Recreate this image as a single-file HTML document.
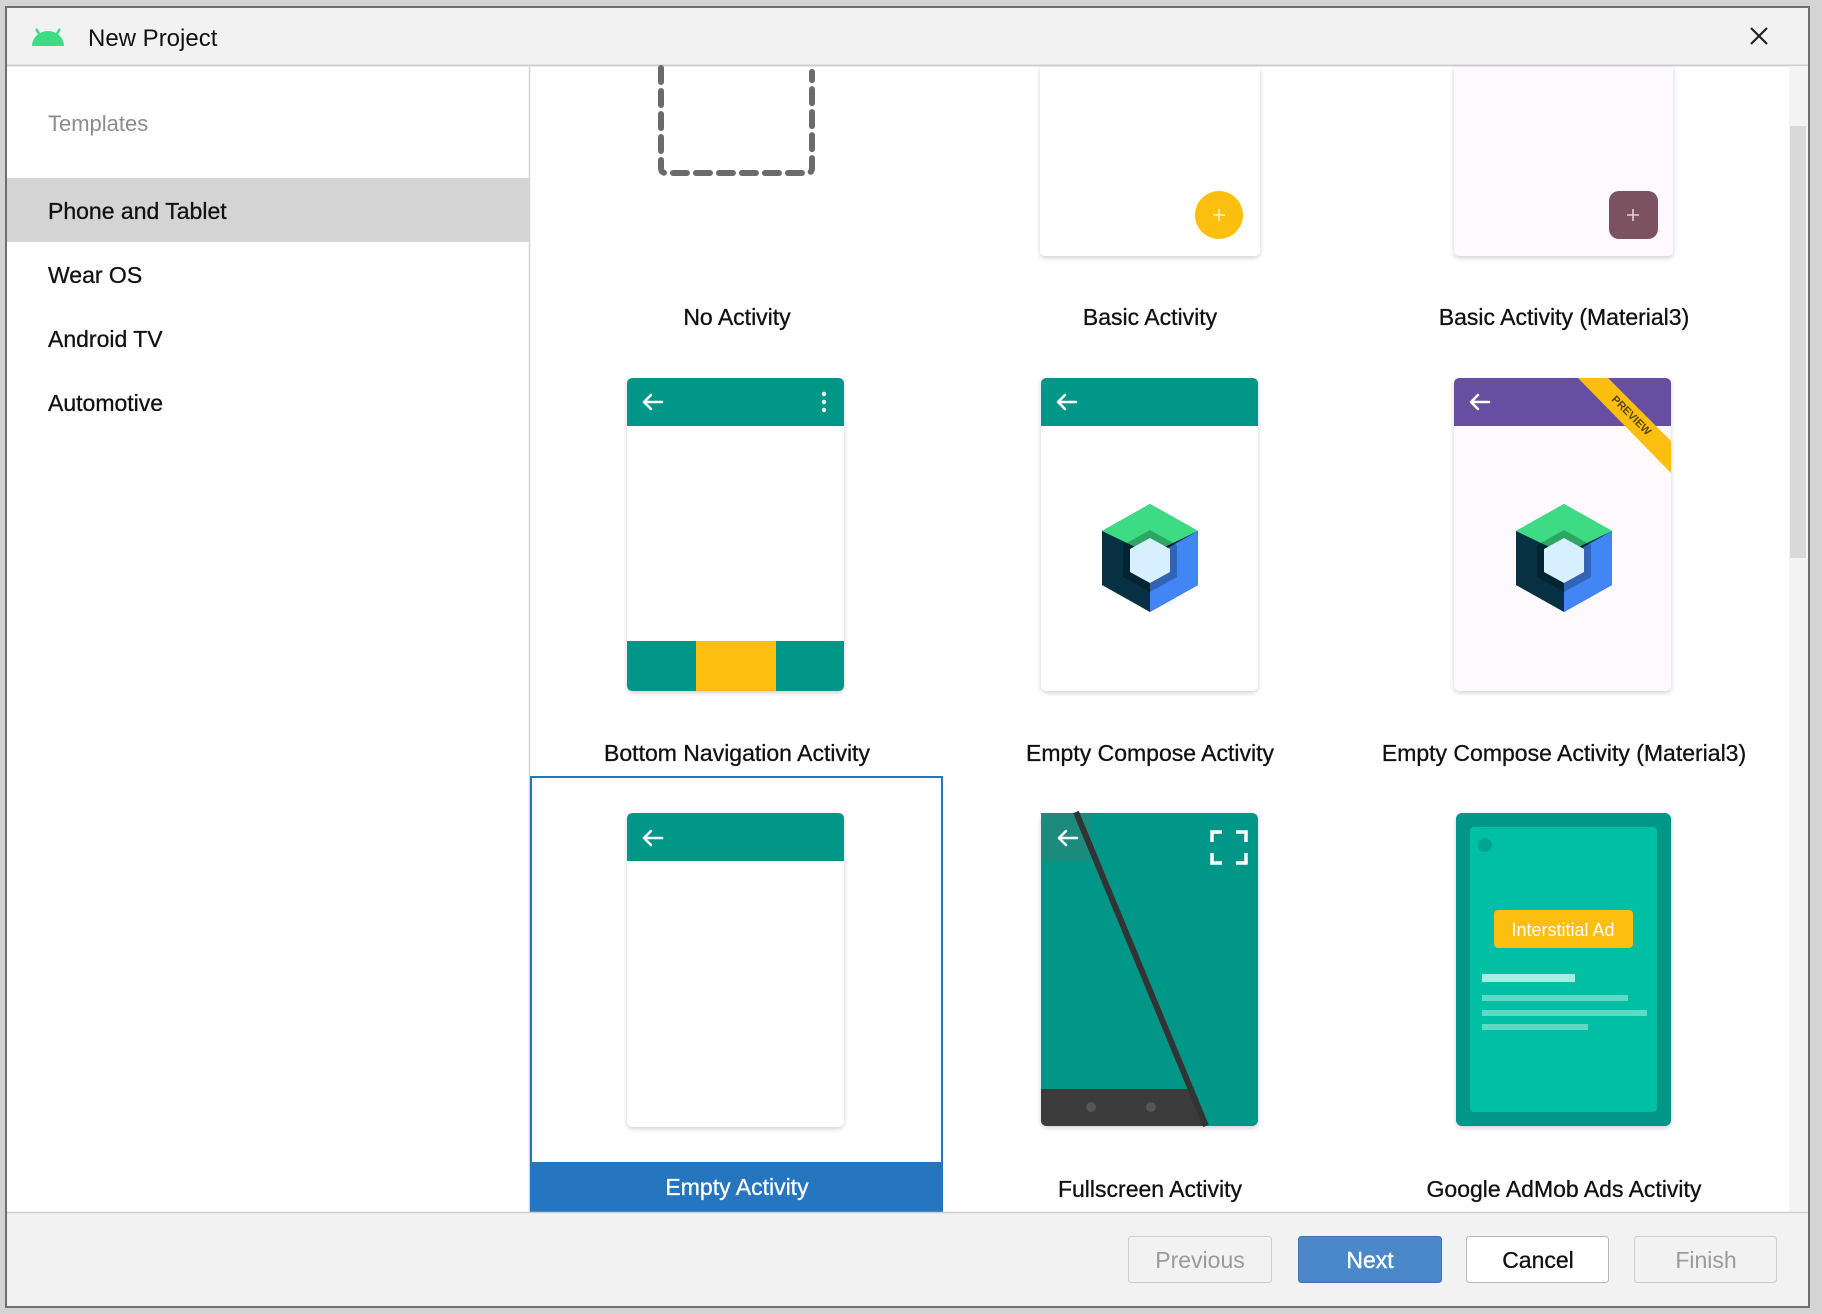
<!DOCTYPE html>
<html><head><meta charset="utf-8"><style>
html,body{margin:0;padding:0;width:1822px;height:1314px;overflow:hidden;background:#d4d4d4;font-family:"Liberation Sans",sans-serif}
</style></head><body>
<svg width="1822" height="1314" viewBox="0 0 1822 1314" xmlns="http://www.w3.org/2000/svg" font-family="Liberation Sans, sans-serif">
<defs>
<filter id="sh" x="-10%" y="-10%" width="120%" height="120%"><feDropShadow dx="0" dy="2" stdDeviation="2.5" flood-color="#000" flood-opacity="0.18"/></filter>
<g id="compose">
 <polygon points="0,-54 48,-27 48,27 0,54 -48,27 -48,-27" fill="#073042"/>
 <polygon points="0,0 48,-27 48,27 0,54" fill="#4285f4"/>
 <polygon points="0,-54 48,-27 0,-4 -48,-27" fill="#3ddc84"/>
 <polygon points="0,-28 27,-13 27,19 0,34 -27,19 -27,-13" fill="#000" opacity="0.25"/>
 <polygon points="0,-20 20,-9 20,14 0,25 -20,14 -20,-9" fill="#d7efff"/>
</g>
<g id="arrow" fill="none" stroke="#fff" stroke-width="2.6" stroke-linecap="round" stroke-linejoin="round">
 <path d="M-9,0 H9 M-9,0 L-2,-7 M-9,0 L-2,7"/>
</g>
</defs>
<rect x="6" y="7" width="1803" height="1300" fill="#fff" stroke="#6e6e6e" stroke-width="2"/>
<rect x="7" y="8" width="1801" height="57" fill="#f2f2f2"/>
<line x1="7" y1="65.5" x2="1808" y2="65.5" stroke="#d0d0d0" stroke-width="2"/>
<path d="M32,46 A16,15 0 0 1 64,46 Z" fill="#3ddc84"/>
<line x1="36" y1="29" x2="40" y2="35" stroke="#3ddc84" stroke-width="2.5"/>
<line x1="60" y1="29" x2="56" y2="35" stroke="#3ddc84" stroke-width="2.5"/>
<text x="88" y="46" font-size="24" fill="#111">New Project</text>
<path d="M1751,28 L1767,44 M1767,28 L1751,44" stroke="#222" stroke-width="2.2"/>
<line x1="529.5" y1="66" x2="529.5" y2="1212" stroke="#d6d6d6" stroke-width="1.5"/>
<text x="48" y="131" font-size="22" fill="#8c8c8c">Templates</text>
<rect x="7" y="178" width="522" height="64" fill="#d4d4d4"/>
<g font-size="23" fill="#111" stroke="#111" stroke-width="0.3">
<text x="48" y="219">Phone and Tablet</text>
<text x="48" y="283">Wear OS</text>
<text x="48" y="347">Android TV</text>
<text x="48" y="411">Automotive</text>
</g>
<rect x="1789" y="66" width="19" height="1146" fill="#f4f4f4"/>
<rect x="1790" y="126" width="16" height="432" fill="#d9d9d9"/>
<path d="M661,68 V168 Q661,173 666,173 H807 Q812,173 812,168 V72" fill="none" stroke="#6b6b6b" stroke-width="6" stroke-dasharray="14,9" stroke-linecap="round"/>
<g filter="url(#sh)">
<path d="M1040,67 H1260 V250 Q1260,256 1254,256 H1046 Q1040,256 1040,250 Z" fill="#fff"/>
<path d="M1454,67 H1673 V250 Q1673,256 1667,256 H1460 Q1454,256 1454,250 Z" fill="#fdf9fd"/>
</g>
<circle cx="1219" cy="215" r="24" fill="#fdbf0f"/>
<path d="M1219,209 V221 M1213,215 H1225" stroke="#fff3c0" stroke-width="1.6"/>
<rect x="1609" y="191" width="49" height="48" rx="10" fill="#7d5260"/>
<path d="M1633,209 V221 M1627,215 H1639" stroke="#e8d0d8" stroke-width="1.6"/>
<g font-size="23" fill="#111" text-anchor="middle" stroke="#111" stroke-width="0.3">
<text x="737" y="325">No Activity</text>
<text x="1150" y="325">Basic Activity</text>
<text x="1564" y="325">Basic Activity (Material3)</text>
</g>
<g filter="url(#sh)">
<rect x="627" y="378" width="217" height="313" rx="6" fill="#fff"/>
<rect x="1041" y="378" width="217" height="313" rx="6" fill="#fff"/>
<rect x="1454" y="378" width="217" height="313" rx="6" fill="#fdf9fd"/>
</g>
<path d="M627,384 Q627,378 633,378 H838 Q844,378 844,384 V426 H627 Z" fill="#009688"/>
<use href="#arrow" x="653" y="402"/>
<circle cx="824" cy="394" r="2.2" fill="#fff"/><circle cx="824" cy="402" r="2.2" fill="#fff"/><circle cx="824" cy="410" r="2.2" fill="#fff"/>
<path d="M627,641 H844 V685 Q844,691 838,691 H633 Q627,691 627,685 Z" fill="#009688"/>
<rect x="696" y="641" width="80" height="50" fill="#fdbf0f"/>
<path d="M1041,384 Q1041,378 1047,378 H1252 Q1258,378 1258,384 V426 H1041 Z" fill="#009688"/>
<use href="#arrow" x="1067" y="402"/>
<use href="#compose" x="1150" y="558"/>
<path d="M1454,384 Q1454,378 1460,378 H1665 Q1671,378 1671,384 V426 H1454 Z" fill="#674ea0"/>
<use href="#arrow" x="1480" y="402"/>
<polygon points="1578,378 1608,378 1671,441 1671,473" fill="#fdbf0f"/>
<text x="0" y="0" font-size="11" fill="#5a4400" font-weight="bold" transform="translate(1611,400) rotate(45)">PREVIEW</text>
<use href="#compose" x="1564" y="558"/>
<g font-size="23" fill="#111" text-anchor="middle" stroke="#111" stroke-width="0.3">
<text x="737" y="761">Bottom Navigation Activity</text>
<text x="1150" y="761">Empty Compose Activity</text>
<text x="1564" y="761">Empty Compose Activity (Material3)</text>
</g>
<rect x="531" y="777" width="411" height="434" fill="#fff" stroke="#2675bf" stroke-width="2"/>
<rect x="531" y="1162" width="412" height="50" fill="#2675bf"/>
<g filter="url(#sh)">
<rect x="627" y="813" width="217" height="314" rx="6" fill="#fff"/>
<rect x="1041" y="813" width="217" height="313" rx="6" fill="#009688"/>
<rect x="1456" y="813" width="215" height="313" rx="6" fill="#009688"/>
</g>
<path d="M627,819 Q627,813 633,813 H838 Q844,813 844,819 V861 H627 Z" fill="#009688"/>
<use href="#arrow" x="653" y="838"/>
<rect x="1041" y="813" width="50" height="48" fill="#1d8a7e"/>
<path d="M1041,1089 H1190 L1206,1126 H1047 Q1041,1126 1041,1120 Z" fill="#3b3b3b"/>
<line x1="1076" y1="812" x2="1206" y2="1126" stroke="#333" stroke-width="6"/>
<circle cx="1091" cy="1107" r="5" fill="#555"/><circle cx="1151" cy="1107" r="5" fill="#555"/>
<use href="#arrow" x="1068" y="838"/>
<path d="M1212,842 V832 H1222 M1236,832 H1246 V842 M1246,853 V863 H1236 M1222,863 H1212 V853" fill="none" stroke="#fff" stroke-width="3.5"/>
<rect x="1470" y="827" width="187" height="285" rx="4" fill="#00bfa5"/>
<circle cx="1485" cy="845" r="7" fill="#00a58e"/>
<rect x="1494" y="910" width="139" height="38" rx="4" fill="#fdbf0f"/>
<text x="1563" y="936" font-size="18" fill="#fff" text-anchor="middle">Interstitial Ad</text>
<rect x="1482" y="974" width="93" height="8" fill="#a9ece0"/>
<rect x="1482" y="995" width="146" height="6" fill="#5fd9c5"/>
<rect x="1482" y="1010" width="165" height="6" fill="#5fd9c5"/>
<rect x="1482" y="1024" width="106" height="6" fill="#5fd9c5"/>
<g font-size="23" text-anchor="middle" stroke-width="0.3">
<text x="737" y="1195" fill="#fff" stroke="#fff">Empty Activity</text>
<text x="1150" y="1197" fill="#111" stroke="#111">Fullscreen Activity</text>
<text x="1564" y="1197" fill="#111" stroke="#111">Google AdMob Ads Activity</text>
</g>
<rect x="7" y="1212" width="1801" height="94" fill="#f2f2f2"/>
<line x1="7" y1="1212.5" x2="1808" y2="1212.5" stroke="#cfcfcf" stroke-width="1.5"/>
<rect x="1128.5" y="1236.5" width="143" height="46" rx="3" fill="#f2f2f2" stroke="#cdcdcd"/>
<rect x="1298.5" y="1236.5" width="143" height="46" rx="3" fill="#4a88c9" stroke="#3a72b2"/>
<rect x="1466.5" y="1236.5" width="142" height="46" rx="3" fill="#fff" stroke="#b8b8b8"/>
<rect x="1634.5" y="1236.5" width="142" height="46" rx="3" fill="#f2f2f2" stroke="#cdcdcd"/>
<g font-size="23" text-anchor="middle">
<text x="1200" y="1268" fill="#9a9a9a">Previous</text>
<text x="1370" y="1268" fill="#fff" stroke="#fff" stroke-width="0.4">Next</text>
<text x="1538" y="1268" fill="#111" stroke="#111" stroke-width="0.3">Cancel</text>
<text x="1706" y="1268" fill="#9a9a9a">Finish</text>
</g>
</svg>
</body></html>
